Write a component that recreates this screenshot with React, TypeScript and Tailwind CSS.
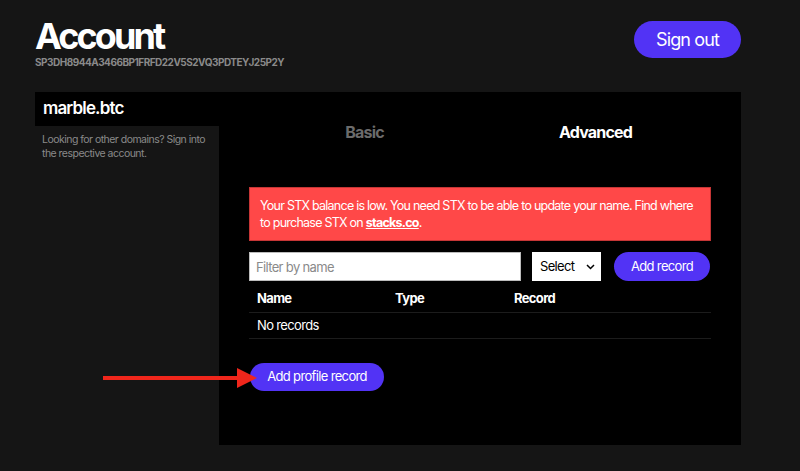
import React from "react";

const App = () => {
  return (
    <div className="relative h-[471px] w-[800px] overflow-hidden bg-[#151515] pl-[35px] pr-[59px] font-['Inter',sans-serif] text-white">
      {/* header */}
      <div className="flex items-start justify-between pt-[18px]">
        <div>
          <h1 className="text-[36px] font-bold leading-[36px] tracking-[-0.08em]">Account</h1>
          <p className="mt-[2px] text-[10px] font-bold leading-[12px] tracking-[-0.05em] text-[#8a8a8a]">
            SP3DH8944A3466BP1FRFD22V5S2VQ3PDTEYJ25P2Y
          </p>
        </div>
        <button className="mt-[3px] h-[37px] w-[107px] rounded-full bg-[#5233f5] text-[18px] leading-none tracking-[-0.05em] text-white">
          Sign out
        </button>
      </div>

      {/* body */}
      <div className="mt-[24px] flex">
        <div className="w-[184px]">
          <div className="flex h-[34px] items-center bg-black pl-[8px] text-[17px] font-semibold tracking-[-0.05em]">
            marble.btc
          </div>
          <p className="px-[7px] pt-[7px] text-[10.5px] leading-[14px] tracking-[-0.05em] text-[#8a8a8a]">
            Looking for other domains? Sign into the respective account.
          </p>
        </div>

        <div className="h-[353px] flex-1 bg-black px-[30px]">
          <div className="grid h-[80px] grid-cols-2 items-center text-center text-[16px] font-bold tracking-[-0.05em]">
            <span className="text-[#6b6b6b]">Basic</span>
            <span className="text-white">Advanced</span>
          </div>

          <div className="mt-[15px] border border-[#c63636] bg-[#ff4848] py-[9px] pl-[10px] pr-[6px] text-[12.5px] leading-[17px] tracking-[-0.06em] text-white">
            Your STX balance is low. You need STX to be able to update your name. Find where to purchase STX on{" "}
            <a className="font-bold underline">stacks.co</a>.
          </div>

          <div className="mt-[11px] flex h-[29px] items-center">
            <input
              className="h-[29px] w-[272px] border border-[#bcbcbc] bg-white px-[6px] text-[13px] tracking-[-0.05em] text-black outline-none placeholder:text-[#8a8a8a]"
              placeholder="Filter by name"
            />
            <div className="ml-[11px] flex h-[29px] w-[69px] items-center justify-between bg-white pl-[8px] pr-[6px] text-[13px] tracking-[-0.05em] text-black">
              <span>Select</span>
              <svg width="9" height="6" viewBox="0 0 9 6" fill="none">
                <path d="M1 1l3.5 3.5L8 1" stroke="black" strokeWidth="1.5" />
              </svg>
            </div>
            <button className="ml-[13px] h-[29px] w-[96px] rounded-full bg-[#5233f5] text-[13px] tracking-[-0.05em] text-white">
              Add record
            </button>
          </div>

          <div className="mt-[5px] text-[13px] tracking-[-0.05em]">
            <div className="flex h-[27px] items-center border-b border-[#1c1c1c] pl-[8px] font-bold">
              <span className="w-[138px]">Name</span>
              <span className="w-[119px]">Type</span>
              <span>Record</span>
            </div>
            <div className="flex h-[26px] items-center border-b border-[#1c1c1c] pl-[8px]">No records</div>
          </div>

          <button className="ml-[1px] mt-[24px] h-[28px] w-[134px] rounded-full bg-[#5233f5] text-[13px] tracking-[-0.05em] text-white">
            Add profile record
          </button>
        </div>
      </div>

      {/* red arrow overlay */}
      <svg className="absolute left-[100px] top-[366px]" width="160" height="24" viewBox="0 0 160 24">
        <line x1="3" y1="12" x2="140" y2="12" stroke="#f0261b" strokeWidth="4" />
        <path d="M137 2 L157 12 L137 22 Z" fill="#f0261b" />
      </svg>
    </div>
  );
};

export default App;
